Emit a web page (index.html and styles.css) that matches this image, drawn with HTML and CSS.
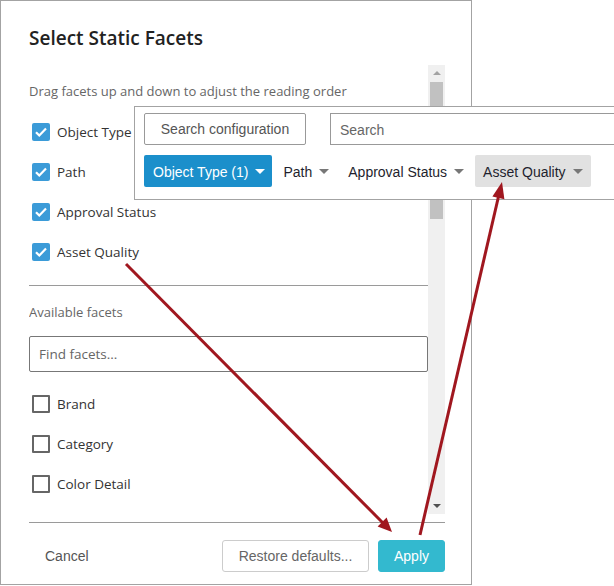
FILE: index.html
```html
<!DOCTYPE html>
<html>
<head>
<meta charset="utf-8">
<link rel="stylesheet" href="styles.css">
</head>
<body>
<div class="page">
  <div class="dialog">
    <h2 class="title">Select Static Facets</h2>
    <div class="scroll-area">
      <div class="scroll-content">
        <p class="hint">Drag facets up and down to adjust the reading order</p>
        <ul class="facet-list selected">
          <li class="facet"><span class="cb checked"><svg viewBox="0 0 18 18" width="18" height="18"><path d="M4 9.2l3.3 3.3L14 5.6" fill="none" stroke="#fff" stroke-width="2.2"/></svg></span>Object Type</li>
          <li class="facet"><span class="cb checked"><svg viewBox="0 0 18 18" width="18" height="18"><path d="M4 9.2l3.3 3.3L14 5.6" fill="none" stroke="#fff" stroke-width="2.2"/></svg></span>Path</li>
          <li class="facet"><span class="cb checked"><svg viewBox="0 0 18 18" width="18" height="18"><path d="M4 9.2l3.3 3.3L14 5.6" fill="none" stroke="#fff" stroke-width="2.2"/></svg></span>Approval Status</li>
          <li class="facet"><span class="cb checked"><svg viewBox="0 0 18 18" width="18" height="18"><path d="M4 9.2l3.3 3.3L14 5.6" fill="none" stroke="#fff" stroke-width="2.2"/></svg></span>Asset Quality</li>
        </ul>
        <hr class="divider">
        <p class="hint avail">Available facets</p>
        <input class="find" type="text" placeholder="Find facets...">
        <ul class="facet-list available">
          <li class="facet"><span class="cb"></span>Brand</li>
          <li class="facet"><span class="cb"></span>Category</li>
          <li class="facet"><span class="cb"></span>Color Detail</li>
        </ul>
      </div>
      <div class="scrollbar">
        <span class="sb-up"></span>
        <span class="sb-thumb"></span>
        <span class="sb-down"></span>
      </div>
    </div>
    <hr class="footer-line">
    <div class="footer">
      <span class="cancel">Cancel</span>
      <div class="footer-buttons">
        <button class="btn restore">Restore defaults...</button>
        <button class="btn apply">Apply</button>
      </div>
    </div>
  </div>

  <div class="panel">
    <div class="panel-top">
      <button class="cfg">Search configuration</button>
      <input class="search" type="text" placeholder="Search">
    </div>
    <div class="panel-facets">
      <span class="fbtn active">Object Type (1)<i class="caret"></i></span>
      <span class="fbtn">Path<i class="caret"></i></span>
      <span class="fbtn">Approval Status<i class="caret"></i></span>
      <span class="fbtn hover">Asset Quality<i class="caret"></i></span>
    </div>
  </div>

  <svg class="arrows" width="614" height="586" viewBox="0 0 614 586">
    <line x1="126" y1="264" x2="382.5" y2="522.5" stroke="#a0171f" stroke-width="3"/>
    <polygon points="392,532 377.6,526.5 386.6,517.6" fill="#a0171f"/>
    <line x1="420" y1="535" x2="498.4" y2="197" stroke="#a0171f" stroke-width="3"/>
    <polygon points="502,182 504.4,199.2 492.4,196.4" fill="#a0171f"/>
  </svg>
</div>
</body>
</html>
```

FILE: styles.css
```css
* { box-sizing: border-box; }
html, body { margin: 0; padding: 0; background: #fff; }
.page {
  position: relative;
  width: 614px;
  height: 586px;
  overflow: hidden;
}
.dialog {
  width: 472px;
  height: 585px;
  border: 1px solid #a3a3a3;
  display: flex;
  flex-direction: column;
  font-family: "Open Sans", "Noto Sans", sans-serif;
  color: #333;
}
.title {
  margin: 24px 0 0 28px;
  font-size: 19px;
  font-weight: 600;
  line-height: 26px;
  color: #222;
  height: 26px;
}
.scroll-area {
  margin: 14px 0 0 28px;
  width: 416px;
  height: 449px;
  display: flex;
}
.scroll-content {
  width: 399px;
  height: 449px;
  overflow: hidden;
}
.hint {
  margin: 17px 0 0 0;
  font-size: 13px;
  line-height: 18px;
  color: #666;
}
.facet-list {
  list-style: none;
  margin: 12px 0 0 0;
  padding: 0;
}
.facet {
  height: 40px;
  display: flex;
  align-items: center;
  font-size: 13.5px;
  color: #333;
}
.cb {
  width: 18px;
  height: 18px;
  margin: 0 7px 0 3px;
  border: 2px solid #666;
  border-radius: 1px;
  display: inline-flex;
  flex: none;
}
.cb.checked {
  border: none;
  background: #3b9bd8;
  border-radius: 2px;
}
.divider {
  margin: 13px 0 0 0;
  border: 0;
  border-top: 1px solid #9a9a9a;
  height: 0;
}
.avail { margin-top: 17px; }
.find {
  display: block;
  margin-top: 15px;
  width: 399px;
  height: 36px;
  border: 1px solid #777;
  border-radius: 2px;
  padding: 0 9px;
  font-family: "Open Sans", "Noto Sans", sans-serif;
  font-size: 13.5px;
  outline: none;
}
.find::placeholder { color: #666; }
.available { margin-top: 12px; }
.scrollbar {
  width: 17px;
  height: 449px;
  background: #f0f0f0;
  position: relative;
  display: flex;
  flex-direction: column;
  align-items: center;
}
.sb-up {
  margin-top: 6px;
  width: 0; height: 0;
  border-left: 4px solid transparent;
  border-right: 4px solid transparent;
  border-bottom: 4px solid #a3a3a3;
}
.sb-thumb {
  margin-top: 7px;
  width: 13px;
  height: 137px;
  background: #c1c1c1;
}
.sb-down {
  margin-top: auto;
  margin-bottom: 6px;
  width: 0; height: 0;
  border-left: 4px solid transparent;
  border-right: 4px solid transparent;
  border-top: 4px solid #505050;
}
.footer-line {
  margin: 8px 0 0 28px;
  width: 416px;
  border: 0;
  border-top: 1px solid #9a9a9a;
  height: 0;
}
.footer {
  margin-top: 17px;
  display: flex;
  align-items: center;
  justify-content: space-between;
  padding: 0 26px 0 44px;
  height: 32px;
  font-family: "Liberation Sans", Arial, sans-serif;
}
.cancel { font-size: 14px; color: #555; }
.footer-buttons { display: flex; gap: 9px; }
.btn {
  height: 32px;
  font-family: "Liberation Sans", Arial, sans-serif;
  font-size: 14px;
  border-radius: 3px;
  padding: 0;
}
.restore {
  width: 147px;
  background: #fff;
  border: 1px solid #ccc;
  color: #666;
}
.apply {
  width: 67px;
  background: #33b9cf;
  border: 1px solid #33b9cf;
  color: #fff;
}

/* overlay panel */
.panel {
  position: absolute;
  left: 134px;
  top: 106px;
  width: 482px;
  height: 94px;
  background: #fff;
  border: 1px solid #a3a3a3;
  padding: 6px 0 0 9px;
  font-family: "Liberation Sans", Arial, sans-serif;
  font-size: 14px;
}
.panel-top {
  display: flex;
  gap: 24px;
  height: 32px;
}
.cfg {
  width: 162px;
  height: 32px;
  background: #fff;
  border: 1px solid #999;
  border-radius: 2px;
  font-family: "Liberation Sans", Arial, sans-serif;
  font-size: 14px;
  color: #555;
  padding: 0;
}
.search {
  flex: 1;
  height: 32px;
  border: 1px solid #999;
  padding: 1px 9px 0;
  font-family: "Liberation Sans", Arial, sans-serif;
  font-size: 14px;
  outline: none;
}
.search::placeholder { color: #666; }
.panel-facets {
  margin-top: 10px;
  display: flex;
  gap: 3px;
}
.fbtn {
  height: 32px;
  display: inline-flex;
  align-items: center;
  padding: 1px 8px 0 8px;
  border-radius: 2px;
  color: #1f1f2e;
}
.fbtn.active { background: #1b8fcb; color: #fff; padding-left: 9px; padding-right: 7px; }
.fbtn.hover { background: #e1e1e1; }
.caret {
  display: inline-block;
  margin-left: 7px;
  width: 0; height: 0;
  border-left: 5px solid transparent;
  border-right: 5px solid transparent;
  border-top: 5px solid #777;
}
.fbtn.active .caret { border-top-color: #fff; }

.arrows {
  position: absolute;
  left: 0;
  top: 0;
  pointer-events: none;
}
```
